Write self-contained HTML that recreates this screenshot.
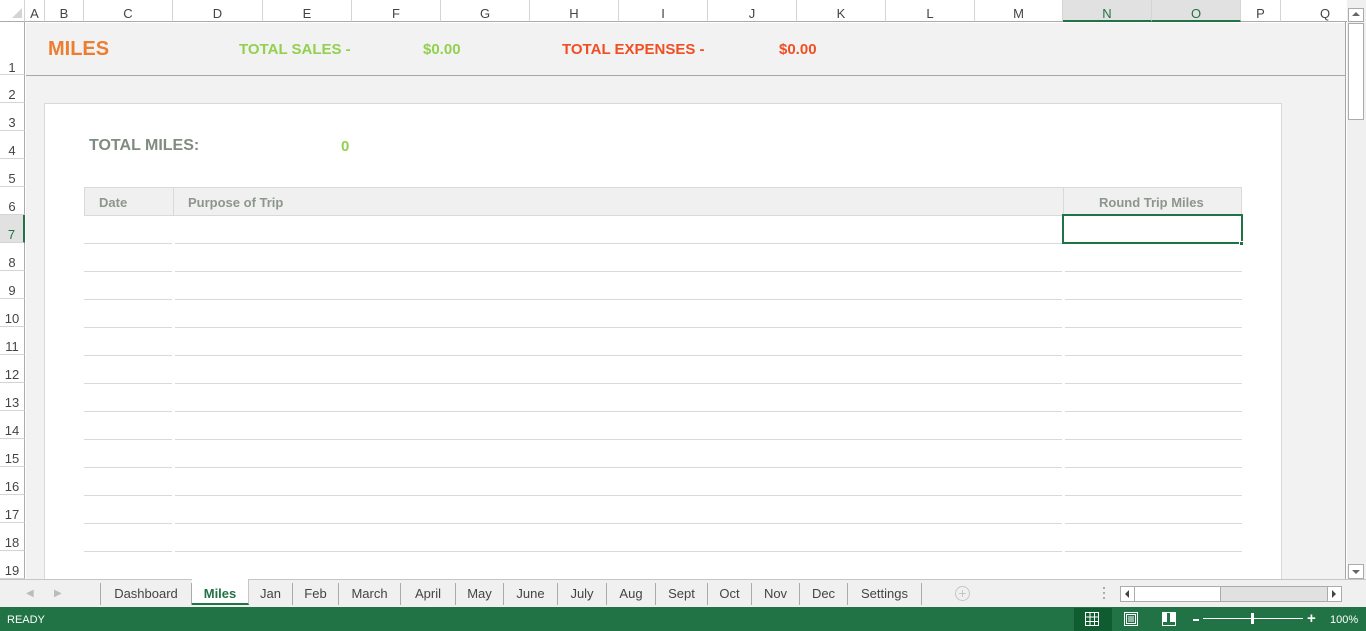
<!DOCTYPE html>
<html><head><style>
*{margin:0;padding:0;box-sizing:border-box}
body{width:1366px;height:631px;overflow:hidden;background:#fff;font-family:"Liberation Sans",Arial,sans-serif;position:relative}
.a{position:absolute}
.ch{position:absolute;top:0;height:22px;border-right:1px solid #d4d4d4;border-bottom:1px solid #ababab;font-size:13px;color:#444;text-align:center;line-height:28px;background:#fff}
.rh{position:absolute;left:0;width:25px;border-bottom:1px solid #d4d4d4;border-right:1px solid #ababab;font-size:13px;color:#444;text-align:center;background:#fff}
.ln{position:absolute;height:1px;background:#d9d9d9}
.tab{position:absolute;top:583px;height:22px;line-height:22px;font-size:13px;color:#444;border-right:1px solid #ababab;text-align:center}
.b{font-weight:bold}
</style></head><body>
<div class="ch" style="left:0;width:25px"></div>
<div class="a" style="left:12px;top:8px;width:0;height:0;border-left:10px solid transparent;border-bottom:10px solid #d4d4d4"></div>
<div class="ch" style="left:25px;width:20px">A</div>
<div class="ch" style="left:45px;width:39px">B</div>
<div class="ch" style="left:84px;width:89px">C</div>
<div class="ch" style="left:173px;width:90px">D</div>
<div class="ch" style="left:263px;width:89px">E</div>
<div class="ch" style="left:352px;width:89px">F</div>
<div class="ch" style="left:441px;width:89px">G</div>
<div class="ch" style="left:530px;width:89px">H</div>
<div class="ch" style="left:619px;width:89px">I</div>
<div class="ch" style="left:708px;width:89px">J</div>
<div class="ch" style="left:797px;width:89px">K</div>
<div class="ch" style="left:886px;width:89px">L</div>
<div class="ch" style="left:975px;width:88px">M</div>
<div class="ch" style="left:1063px;width:89px;background:#e1e1e1;color:#217346;border-bottom:2px solid #217346">N</div>
<div class="ch" style="left:1152px;width:89px;background:#e1e1e1;color:#217346;border-bottom:2px solid #217346">O</div>
<div class="ch" style="left:1241px;width:40px">P</div>
<div class="ch" style="left:1281px;width:88px;border-right:none">Q</div>
<div class="rh" style="top:22px;height:53px;line-height:92px">1</div>
<div class="rh" style="top:75px;height:28px;line-height:40px">2</div>
<div class="rh" style="top:103px;height:28px;line-height:40px">3</div>
<div class="rh" style="top:131px;height:28px;line-height:40px">4</div>
<div class="rh" style="top:159px;height:28px;line-height:40px">5</div>
<div class="rh" style="top:187px;height:28px;line-height:40px">6</div>
<div class="rh" style="top:215px;height:28px;line-height:40px;background:#e1e1e1;color:#217346;border-right:2px solid #217346">7</div>
<div class="rh" style="top:243px;height:28px;line-height:40px">8</div>
<div class="rh" style="top:271px;height:28px;line-height:40px">9</div>
<div class="rh" style="top:299px;height:28px;line-height:40px">10</div>
<div class="rh" style="top:327px;height:28px;line-height:40px">11</div>
<div class="rh" style="top:355px;height:28px;line-height:40px">12</div>
<div class="rh" style="top:383px;height:28px;line-height:40px">13</div>
<div class="rh" style="top:411px;height:28px;line-height:40px">14</div>
<div class="rh" style="top:439px;height:28px;line-height:40px">15</div>
<div class="rh" style="top:467px;height:28px;line-height:40px">16</div>
<div class="rh" style="top:495px;height:28px;line-height:40px">17</div>
<div class="rh" style="top:523px;height:28px;line-height:40px">18</div>
<div class="rh" style="top:551px;height:28px;line-height:40px">19</div>
<div class="a" style="left:26px;top:23px;width:1319px;height:556px;background:#f2f2f2"></div>
<div class="a" style="left:26px;top:75px;width:1319px;height:1px;background:#a6a6a6"></div>
<div class="a" style="left:1345px;top:22px;width:1px;height:557px;background:#a6a6a6"></div>
<div class="a" style="left:44px;top:103px;width:1238px;height:476px;background:#fff;border:1px solid #d9d9d9;border-bottom:none"></div>
<div class="a b" style="left:48px;top:38px;font-size:20px;color:#ed7d31">MILES</div>
<div class="a b" style="left:239px;top:41px;font-size:15px;color:#92d050">TOTAL SALES -</div>
<div class="a b" style="left:423px;top:41px;font-size:15px;color:#92d050">$0.00</div>
<div class="a b" style="left:562px;top:41px;font-size:15px;color:#f04e23">TOTAL EXPENSES -</div>
<div class="a b" style="left:779px;top:41px;font-size:15px;color:#f04e23">$0.00</div>
<div class="a b" style="left:89px;top:137px;font-size:16px;color:#7f8c7f">TOTAL MILES:</div>
<div class="a b" style="left:341px;top:138px;font-size:15px;color:#92d050">0</div>
<div class="a" style="left:84px;top:187px;width:1158px;height:29px;background:#f0f0f0;border:1px solid #d9d9d9"></div>
<div class="a" style="left:173px;top:187px;width:1px;height:29px;background:#d9d9d9"></div>
<div class="a" style="left:1063px;top:187px;width:1px;height:29px;background:#d9d9d9"></div>
<div class="a b" style="left:99px;top:195px;font-size:13px;color:#8c968c">Date</div>
<div class="a b" style="left:188px;top:195px;font-size:13px;color:#8c968c">Purpose of Trip</div>
<div class="a b" style="left:1099px;top:195px;font-size:13px;color:#8c968c">Round Trip Miles</div>
<div class="ln" style="left:84px;top:243px;width:88px"></div><div class="ln" style="left:175px;top:243px;width:887px"></div><div class="ln" style="left:1065px;top:243px;width:177px"></div>
<div class="ln" style="left:84px;top:271px;width:88px"></div><div class="ln" style="left:175px;top:271px;width:887px"></div><div class="ln" style="left:1065px;top:271px;width:177px"></div>
<div class="ln" style="left:84px;top:299px;width:88px"></div><div class="ln" style="left:175px;top:299px;width:887px"></div><div class="ln" style="left:1065px;top:299px;width:177px"></div>
<div class="ln" style="left:84px;top:327px;width:88px"></div><div class="ln" style="left:175px;top:327px;width:887px"></div><div class="ln" style="left:1065px;top:327px;width:177px"></div>
<div class="ln" style="left:84px;top:355px;width:88px"></div><div class="ln" style="left:175px;top:355px;width:887px"></div><div class="ln" style="left:1065px;top:355px;width:177px"></div>
<div class="ln" style="left:84px;top:383px;width:88px"></div><div class="ln" style="left:175px;top:383px;width:887px"></div><div class="ln" style="left:1065px;top:383px;width:177px"></div>
<div class="ln" style="left:84px;top:411px;width:88px"></div><div class="ln" style="left:175px;top:411px;width:887px"></div><div class="ln" style="left:1065px;top:411px;width:177px"></div>
<div class="ln" style="left:84px;top:439px;width:88px"></div><div class="ln" style="left:175px;top:439px;width:887px"></div><div class="ln" style="left:1065px;top:439px;width:177px"></div>
<div class="ln" style="left:84px;top:467px;width:88px"></div><div class="ln" style="left:175px;top:467px;width:887px"></div><div class="ln" style="left:1065px;top:467px;width:177px"></div>
<div class="ln" style="left:84px;top:495px;width:88px"></div><div class="ln" style="left:175px;top:495px;width:887px"></div><div class="ln" style="left:1065px;top:495px;width:177px"></div>
<div class="ln" style="left:84px;top:523px;width:88px"></div><div class="ln" style="left:175px;top:523px;width:887px"></div><div class="ln" style="left:1065px;top:523px;width:177px"></div>
<div class="ln" style="left:84px;top:551px;width:88px"></div><div class="ln" style="left:175px;top:551px;width:887px"></div><div class="ln" style="left:1065px;top:551px;width:177px"></div>
<div class="a" style="left:1062px;top:214px;width:181px;height:30px;border:2px solid #217346"></div>
<div class="a" style="left:1239px;top:241px;width:5px;height:5px;background:#217346;border:1px solid #fff"></div>
<div class="a" style="left:1347px;top:0;width:19px;height:579px;background:#f0f0f0"></div>
<div class="a" style="left:1348px;top:8px;width:16px;height:14px;background:#fff;border:1px solid #ababab"></div>
<div class="a" style="left:1352px;top:12px;width:0;height:0;border-left:4px solid transparent;border-right:4px solid transparent;border-bottom:4px solid #666"></div>
<div class="a" style="left:1348px;top:23px;width:16px;height:97px;background:#fff;border:1px solid #ababab"></div>
<div class="a" style="left:1348px;top:564px;width:16px;height:15px;background:#fff;border:1px solid #ababab"></div>
<div class="a" style="left:1352px;top:570px;width:0;height:0;border-left:4px solid transparent;border-right:4px solid transparent;border-top:4px solid #666"></div>
<div class="a" style="left:0;top:579px;width:1366px;height:28px;background:#f0f0f0;border-top:1px solid #c6c6c6"></div>
<div class="a" style="left:26px;top:588px;font-size:10px;color:#bbb">◀</div>
<div class="a" style="left:54px;top:588px;font-size:10px;color:#bbb">▶</div>
<div class="a" style="left:100px;top:583px;width:1px;height:22px;background:#ababab"></div>
<div class="tab" style="left:101px;width:91px">Dashboard</div>
<div class="tab b" style="left:192px;top:579px;height:26px;line-height:29px;width:57px;background:#fff;color:#217346;border-bottom:2px solid #217346;border-right:1px solid #c6c6c6">Miles</div>
<div class="tab" style="left:249px;width:44px">Jan</div>
<div class="tab" style="left:293px;width:46px">Feb</div>
<div class="tab" style="left:339px;width:62px">March</div>
<div class="tab" style="left:401px;width:55px">April</div>
<div class="tab" style="left:456px;width:48px">May</div>
<div class="tab" style="left:504px;width:54px">June</div>
<div class="tab" style="left:558px;width:49px">July</div>
<div class="tab" style="left:607px;width:49px">Aug</div>
<div class="tab" style="left:656px;width:52px">Sept</div>
<div class="tab" style="left:708px;width:44px">Oct</div>
<div class="tab" style="left:752px;width:48px">Nov</div>
<div class="tab" style="left:800px;width:48px">Dec</div>
<div class="tab" style="left:848px;width:74px">Settings</div>
<div class="a" style="left:955px;top:586px;width:15px;height:15px;border:1px solid #c6c6c6;border-radius:50%;color:#c6c6c6;font-size:14px;line-height:12px;text-align:center">+</div>
<div class="a" style="left:1103px;top:587px;width:2px;height:2px;background:#aaa;box-shadow:0 5px 0 #aaa,0 10px 0 #aaa"></div>
<div class="a" style="left:1120px;top:586px;width:222px;height:16px;background:#e1e1e1;border:1px solid #ababab"></div>
<div class="a" style="left:1121px;top:587px;width:14px;height:14px;background:#fff;border-right:1px solid #ababab"></div>
<div class="a" style="left:1125px;top:590px;width:0;height:0;border-top:4px solid transparent;border-bottom:4px solid transparent;border-right:4px solid #444"></div>
<div class="a" style="left:1135px;top:587px;width:86px;height:14px;background:#fff;border-right:1px solid #ababab"></div>
<div class="a" style="left:1327px;top:587px;width:14px;height:14px;background:#fff;border-left:1px solid #ababab"></div>
<div class="a" style="left:1332px;top:590px;width:0;height:0;border-top:4px solid transparent;border-bottom:4px solid transparent;border-left:4px solid #444"></div>
<div class="a" style="left:0;top:607px;width:1366px;height:24px;background:#217346"></div>
<div class="a" style="left:7px;top:614px;font-size:11px;color:#fff">READY</div>
<div class="a" style="left:1074px;top:608px;width:38px;height:23px;background:#0e5c30"></div>
<svg class="a" style="left:1085px;top:612px" width="14" height="14"><g fill="none" stroke="#fff" stroke-width="1"><rect x="0.5" y="0.5" width="13" height="13"/><path d="M5 0.5V13.5M9.5 0.5V13.5M0.5 5H13.5M0.5 9.5H13.5"/></g></svg>
<svg class="a" style="left:1124px;top:612px" width="14" height="14"><g fill="none" stroke="#fff" stroke-width="1"><rect x="0.5" y="0.5" width="13" height="13"/><rect x="2.5" y="2.5" width="9" height="9"/><path d="M4 5H10M4 7H10M4 9H10"/></g></svg>
<svg class="a" style="left:1162px;top:612px" width="14" height="14"><g fill="none" stroke="#fff" stroke-width="1"><rect x="0.5" y="0.5" width="13" height="13"/></g><rect x="1" y="1" width="4" height="9" fill="#fff"/><rect x="8" y="1" width="5" height="9" fill="#fff"/></svg>
<div class="a" style="left:1193px;top:619px;width:6px;height:2px;background:#fff"></div>
<div class="a" style="left:1203px;top:618px;width:100px;height:1px;background:#fff"></div>
<div class="a" style="left:1251px;top:613px;width:3px;height:11px;background:#fff"></div>
<div class="a" style="left:1307px;top:614px;color:#fff;font-size:15px;line-height:10px;font-weight:bold">+</div>
<div class="a" style="left:1330px;top:614px;font-size:11px;color:#fff">100%</div>
</body></html>
